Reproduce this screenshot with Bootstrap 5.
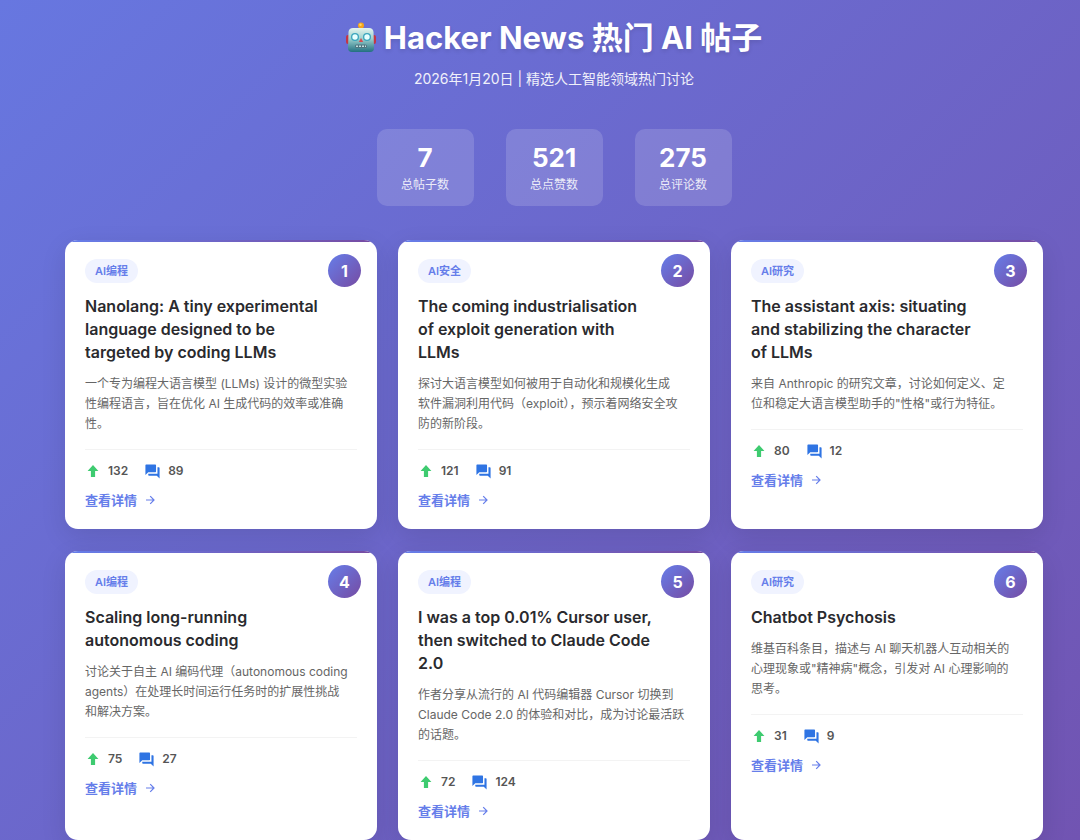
<!DOCTYPE html>
<html lang="zh-CN">
<head>
<meta charset="utf-8">
<meta name="viewport" content="width=device-width, initial-scale=1">
<title>Hacker News 热门 AI 帖子</title>
<link href="https://cdn.jsdelivr.net/npm/bootstrap@5.3.0/dist/css/bootstrap.min.css" rel="stylesheet">
<style>
  body { font-family: Inter, "Noto Sans CJK SC", sans-serif; background: linear-gradient(135deg, #6777e0 0%, #7154b2 100%) no-repeat; min-height: 100vh; color: #fff; }
  .page { padding: 14px 37px 0 65px; }
  .site-title { font-size: 31px; line-height: 48px; font-weight: 700; text-shadow: 0 2px 4px rgba(0,0,0,.12); }
  .subtitle { font-size: 14px; line-height: 22px; opacity: .9; margin: 6px 0 0; }
  .stats { gap: 32px; margin: 39px 0 34px; }
  .stat { min-width: 97px; padding: 12px 20px 11px; border-radius: 10px; background: rgba(255,255,255,.15); }
  .stat-num { font-size: 26px; line-height: 34px; font-weight: 700; }
  .stat-label { font-size: 12px; line-height: 20px; opacity: .85; }
  .posts { display: grid; grid-template-columns: repeat(3, 1fr); gap: 22px 21px; }
  @media (max-width: 900px) { .posts { grid-template-columns: 1fr; } .page { padding-left: 20px; padding-right: 20px; } }
  .post { position: relative; overflow: hidden; border: 0; border-radius: 13px; padding: 19px 20px; color: #2a2a2e; min-height: 289px; box-shadow: 0 8px 26px rgba(0,0,0,.1); }
  .post::before { content: ""; position: absolute; inset: 0 0 auto 0; height: 2px; background: linear-gradient(90deg, #667eea, #764ba2); }
  .rank { position: absolute; top: 14px; right: 16px; width: 33px; height: 33px; border-radius: 50%; font-size: 16px; font-weight: 700; color: #fff; background: linear-gradient(135deg, #667eea, #764ba2); }
  .topic { font-size: 11px; line-height: 24px; padding: 0 10px; border-radius: 12px; background: #f0f3ff; color: #667eea; font-weight: 600; }
  .post-title { font-size: 16px; line-height: 23px; font-weight: 600; margin: 12px 34px 10px 0; }
  .post-text { font-size: 12px; line-height: 20px; color: #666; margin: 0 4px 15px 0; }
  .post-meta { border-top: 1px solid #f3f3f3; padding-top: 11px; gap: 16px; font-size: 12px; line-height: 20px; font-weight: 600; color: #555; }
  .count { gap: 7px; }
  .details { font-size: 13px; line-height: 20px; margin-top: 9px; gap: 7px; color: #667eea; font-weight: 600; }
</style>
</head>
<body>
<svg class="d-none" aria-hidden="true">
  <symbol id="up" viewBox="0 0 16 16"><path fill="#3ecb70" d="M8 2l5.400 6H10.100v6H5.900V8H2.600z"/></symbol>
  <symbol id="chat" viewBox="0 0 24 24"><path fill="#2f74e3" d="M21 6h-2v9H6v2c0 .55.45 1 1 1h11l4 4V7c0-.55-.45-1-1-1zm-4 6V3c0-.55-.45-1-1-1H3c-.55 0-1 .45-1 1v14l4-4h10c.55 0 1-.45 1-1z"/></symbol>
  <symbol id="go" viewBox="0 0 12 12"><path fill="none" stroke="#667eea" stroke-width="1.200" d="M2 6h8M6.200 2.200L10 6 6.200 9.800"/></symbol>
</svg>
<div class="page">
  <header class="text-center">
    <h1 class="site-title d-flex justify-content-center align-items-center gap-2 m-0">
      <svg width="30" height="32" viewBox="0 0 30 32" aria-hidden="true">
        <defs><linearGradient id="face" x2="0" y2="1"><stop offset="0" stop-color="#e4f4ee"/><stop offset=".45" stop-color="#9bd0ce"/><stop offset="1" stop-color="#226f80"/></linearGradient></defs>
        <path d="M14 4h2v5h-2z" fill="#b9672e"/><circle cx="15" cy="3.500" r="3" fill="#f5a51c"/><circle cx="14.500" cy="2.800" r="1.200" fill="#ffd964"/>
        <rect y="13" width="4" height="9" rx="2" fill="#c53445"/><rect x="26" y="13" width="4" height="9" rx="2" fill="#c53445"/>
        <path d="M7 6h16q4 0 4.500 4l.5 16q0 4-4 4H6q-4 0-4-4l.5-16Q3 6 7 6z" fill="url(#face)"/>
        <circle cx="9" cy="15" r="4" fill="#3aa5bd"/><circle cx="21" cy="15" r="4" fill="#3aa5bd"/><circle cx="9" cy="15" r="2.700" fill="#e6ffff"/><circle cx="21" cy="15" r="2.700" fill="#e6ffff"/>
        <path d="M15 16l2.200 4h-4.400z" fill="#d94a50"/><rect x="9" y="22.500" width="12" height="3.500" rx="1.500" fill="#4f7580"/><path d="M10 24.200h10" stroke="#bfe0df" stroke-width="1.500" stroke-dasharray="2 1"/>
      </svg>
      <span>Hacker News 热门 AI 帖子</span>
    </h1>
    <p class="subtitle">2026年1月20日 | 精选人工智能领域热门讨论</p>
    <div class="stats d-flex flex-wrap justify-content-center">
      <div class="stat"><div class="stat-num">7</div><div class="stat-label">总帖子数</div></div>
      <div class="stat"><div class="stat-num">521</div><div class="stat-label">总点赞数</div></div>
      <div class="stat"><div class="stat-num">275</div><div class="stat-label">总评论数</div></div>
    </div>
  </header>
  <main class="posts">
    <article class="card post align-items-start">
      <span class="rank d-flex align-items-center justify-content-center">1</span><span class="topic">AI编程</span>
      <h2 class="post-title">Nanolang: A tiny experimental language designed to be targeted by coding LLMs</h2>
      <p class="post-text">一个专为编程大语言模型 (LLMs) 设计的微型实验性编程语言，旨在优化 AI 生成代码的效率或准确<br>性。</p>
      <div class="post-meta d-flex align-self-stretch"><span class="count d-flex align-items-center"><svg width="16" height="16"><use href="#up"/></svg>132</span><span class="count d-flex align-items-center"><svg width="17" height="17"><use href="#chat"/></svg>89</span></div>
      <a class="details d-flex align-items-center text-decoration-none" href="#">查看详情 <svg width="12" height="12"><use href="#go"/></svg></a>
    </article>
    <article class="card post align-items-start">
      <span class="rank d-flex align-items-center justify-content-center">2</span><span class="topic">AI安全</span>
      <h2 class="post-title">The coming industrialisation of exploit generation with LLMs</h2>
      <p class="post-text">探讨大语言模型如何被用于自动化和规模化生成<br>软件漏洞利用代码（exploit），预示着网络安全攻<br>防的新阶段。</p>
      <div class="post-meta d-flex align-self-stretch"><span class="count d-flex align-items-center"><svg width="16" height="16"><use href="#up"/></svg>121</span><span class="count d-flex align-items-center"><svg width="17" height="17"><use href="#chat"/></svg>91</span></div>
      <a class="details d-flex align-items-center text-decoration-none" href="#">查看详情 <svg width="12" height="12"><use href="#go"/></svg></a>
    </article>
    <article class="card post align-items-start">
      <span class="rank d-flex align-items-center justify-content-center">3</span><span class="topic">AI研究</span>
      <h2 class="post-title">The assistant axis: situating and stabilizing the character of LLMs</h2>
      <p class="post-text">来自 Anthropic 的研究文章，讨论如何定义、定<br>位和稳定大语言模型助手的"性格"或行为特征。</p>
      <div class="post-meta d-flex align-self-stretch"><span class="count d-flex align-items-center"><svg width="16" height="16"><use href="#up"/></svg>80</span><span class="count d-flex align-items-center"><svg width="17" height="17"><use href="#chat"/></svg>12</span></div>
      <a class="details d-flex align-items-center text-decoration-none" href="#">查看详情 <svg width="12" height="12"><use href="#go"/></svg></a>
    </article>
    <article class="card post align-items-start">
      <span class="rank d-flex align-items-center justify-content-center">4</span><span class="topic">AI编程</span>
      <h2 class="post-title">Scaling long-running autonomous coding</h2>
      <p class="post-text">讨论关于自主 AI 编码代理（autonomous coding agents）在处理长时间运行任务时的扩展性挑战<br>和解决方案。</p>
      <div class="post-meta d-flex align-self-stretch"><span class="count d-flex align-items-center"><svg width="16" height="16"><use href="#up"/></svg>75</span><span class="count d-flex align-items-center"><svg width="17" height="17"><use href="#chat"/></svg>27</span></div>
      <a class="details d-flex align-items-center text-decoration-none" href="#">查看详情 <svg width="12" height="12"><use href="#go"/></svg></a>
    </article>
    <article class="card post align-items-start">
      <span class="rank d-flex align-items-center justify-content-center">5</span><span class="topic">AI编程</span>
      <h2 class="post-title">I was a top 0.01% Cursor user, then switched to Claude Code 2.0</h2>
      <p class="post-text">作者分享从流行的 AI 代码编辑器 Cursor 切换到<br>Claude Code 2.0 的体验和对比，成为讨论最活跃<br>的话题。</p>
      <div class="post-meta d-flex align-self-stretch"><span class="count d-flex align-items-center"><svg width="16" height="16"><use href="#up"/></svg>72</span><span class="count d-flex align-items-center"><svg width="17" height="17"><use href="#chat"/></svg>124</span></div>
      <a class="details d-flex align-items-center text-decoration-none" href="#">查看详情 <svg width="12" height="12"><use href="#go"/></svg></a>
    </article>
    <article class="card post align-items-start">
      <span class="rank d-flex align-items-center justify-content-center">6</span><span class="topic">AI研究</span>
      <h2 class="post-title">Chatbot Psychosis</h2>
      <p class="post-text">维基百科条目，描述与 AI 聊天机器人互动相关的<br>心理现象或"精神病"概念，引发对 AI 心理影响的<br>思考。</p>
      <div class="post-meta d-flex align-self-stretch"><span class="count d-flex align-items-center"><svg width="16" height="16"><use href="#up"/></svg>31</span><span class="count d-flex align-items-center"><svg width="17" height="17"><use href="#chat"/></svg>9</span></div>
      <a class="details d-flex align-items-center text-decoration-none" href="#">查看详情 <svg width="12" height="12"><use href="#go"/></svg></a>
    </article>
  </main>
</div>
<script src="https://cdn.jsdelivr.net/npm/bootstrap@5.3.0/dist/js/bootstrap.bundle.min.js"></script>
</body>
</html>
